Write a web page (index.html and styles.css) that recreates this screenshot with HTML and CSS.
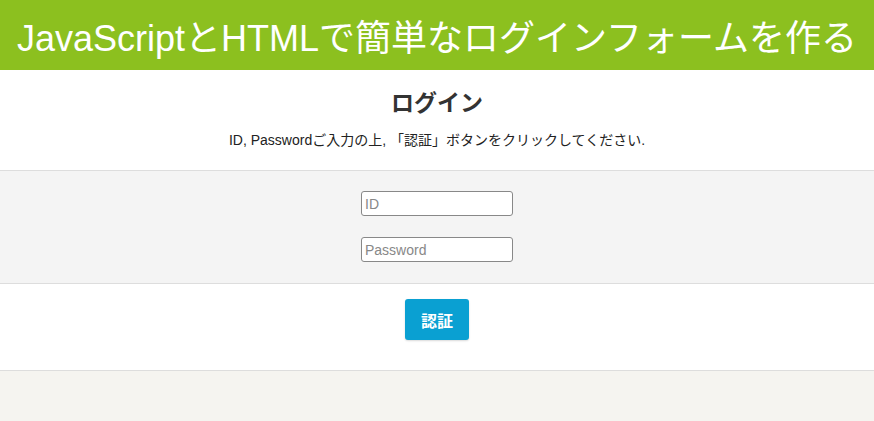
FILE: index.html
```html
<!DOCTYPE html>
<html lang="ja">
  <head>
    <meta charset="UTF-8" />
    <meta name="viewport" content="width=device-width, initial-scale=1.0" />
    <title>ログイン</title>
    <link rel="stylesheet" href="styles.css">
  </head>
  <body>
    <header class="top-bar">
      <h1>JavaScriptとHTMLで簡単なログインフォームを作る</h1>
    </header>
    <section class="intro">
      <h2>ログイン</h2>
      <p>ID, Passwordご入力の上, 「認証」ボタンをクリックしてください.</p>
    </section>
    <form class="login-form" id="login">
      <div class="fields">
        <input type="text" id="user-id" placeholder="ID" />
        <input type="password" id="user-pass" placeholder="Password" />
      </div>
      <div class="actions">
        <button type="submit">認証</button>
      </div>
    </form>
    <div class="page-rest"></div>
  </body>
</html>
```

FILE: styles.css
```css
body {
  margin: 0;
  background-color: #f5f4f0;
  font-family: "Liberation Sans", Arial, "Noto Sans CJK JP", sans-serif;
  color: #333;
}
.top-bar {
  background-color: #8cc01f;
  height: 70px;
  display: flex;
  align-items: center;
  justify-content: center;
}
.top-bar h1 {
  margin: 0;
  color: #fff;
  font-weight: normal;
  font-size: 36px;
  white-space: nowrap;
}
.intro {
  background-color: #fff;
  text-align: center;
  height: 100px;
  border-bottom: 1px solid #ddd;
}
.intro h2 {
  margin: 0;
  padding-top: 20px;
  font-size: 23px;
  line-height: 26px;
  color: #333;
}
.intro p {
  margin: 13px 0 0;
  font-size: 14px;
  color: #222;
}
.login-form {
  margin: 0;
}
.fields {
  background-color: #f4f4f4;
  display: flex;
  flex-direction: column;
  align-items: center;
  gap: 21px;
  padding: 20px 0 21px;
  border-bottom: 1px solid #ddd;
}
.fields input {
  width: 152px;
  height: 25px;
  box-sizing: border-box;
  border: 1px solid #888;
  border-radius: 3px;
  padding: 0 3px;
  font-family: "Liberation Sans", Arial, sans-serif;
  font-size: 14px;
  background: #fff;
}
.fields input::placeholder {
  color: #888;
}
.actions {
  background-color: #fff;
  height: 87px;
  display: flex;
  justify-content: center;
  padding-top: 15px;
  box-sizing: border-box;
  border-bottom: 1px solid #ddd;
}
.actions button {
  width: 64px;
  height: 41px;
  background-color: #0aa0d2;
  color: #fff;
  border: none;
  border-radius: 3px;
  font-weight: bold;
  font-size: 16px;
  font-family: "Noto Sans CJK JP", sans-serif;
  box-shadow: 0 1px 2px rgba(0, 0, 0, 0.15);
}
```
